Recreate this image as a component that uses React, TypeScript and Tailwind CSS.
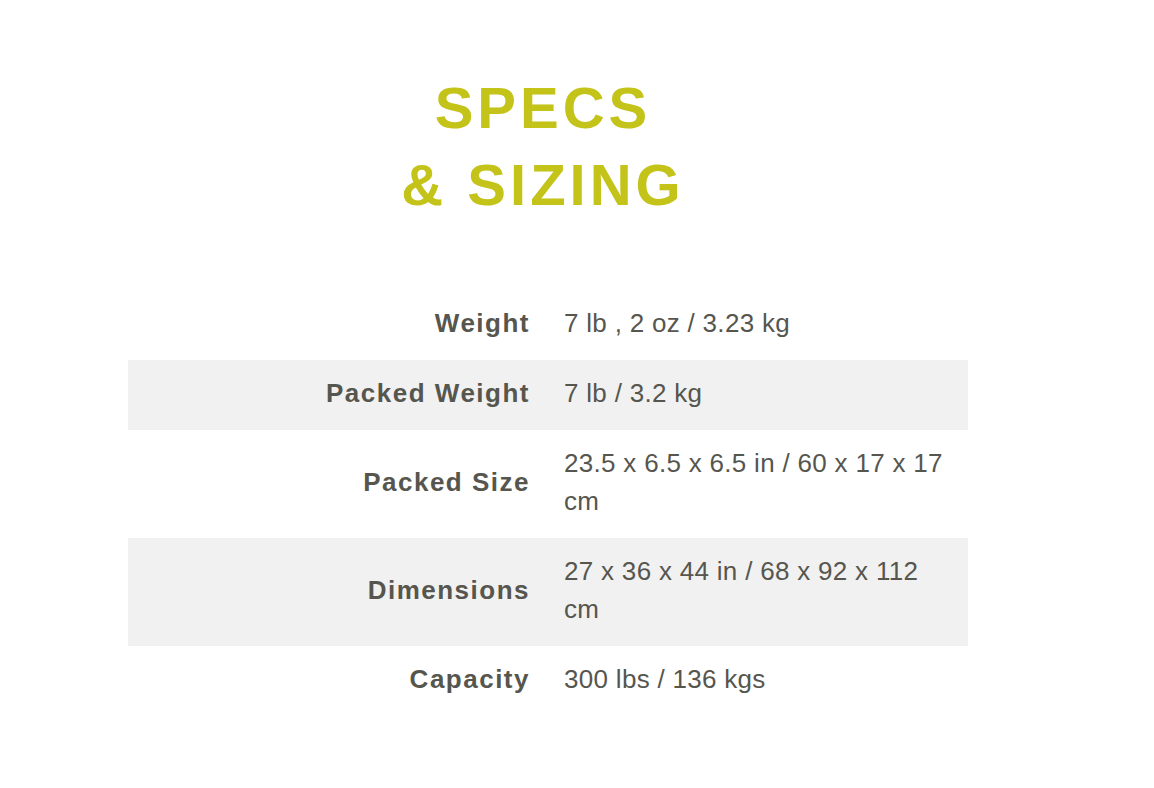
const specs = [
  { label: "Weight", value: "7 lb , 2 oz / 3.23 kg" },
  { label: "Packed Weight", value: "7 lb / 3.2 kg" },
  { label: "Packed Size", value: "23.5 x 6.5 x 6.5 in / 60 x 17 x 17 cm" },
  { label: "Dimensions", value: "27 x 36 x 44 in / 68 x 92 x 112 cm" },
  { label: "Capacity", value: "300 lbs / 136 kgs" },
];

export default function App() {
  return (
    <main className="min-h-screen bg-white font-['Liberation_Sans',Arial,sans-serif]">
      <div className="ml-[128px] w-[840px] pt-[69px]">
        <h2 className="pr-[10px] text-center text-[58px] font-bold uppercase leading-[77px] tracking-[4px] text-[#c3c31a]">
          Specs
          <br />& Sizing
        </h2>

        <div className="mt-[67px]">
          {specs.map((row, i) => (
            <div
              key={row.label}
              className={`grid grid-cols-[420px_1fr] pt-[14px] pb-[18px] text-[26px] leading-[38px] text-[#56564f] ${
                i % 2 === 1 ? "bg-[#f1f1f1]" : ""
              }`}
            >
              <div className="self-center pr-[18px] text-right font-bold tracking-[1.5px]">
                {row.label}
              </div>
              <div className="pl-4 pr-4 tracking-[0.3px]">{row.value}</div>
            </div>
          ))}
        </div>
      </div>
    </main>
  );
}
